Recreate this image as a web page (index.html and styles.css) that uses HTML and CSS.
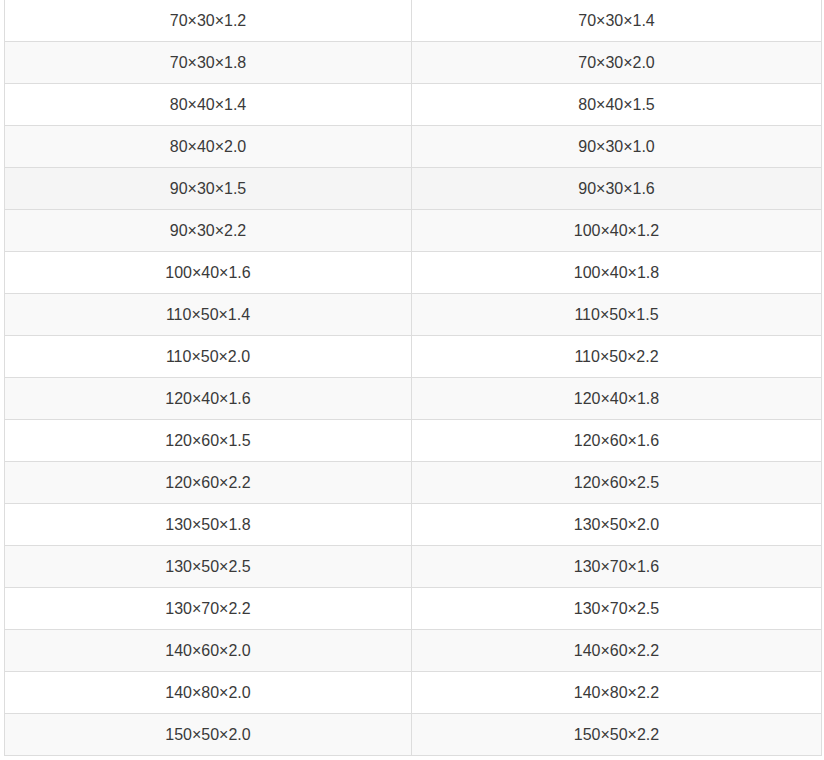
FILE: index.html
```html
<!DOCTYPE html>
<html lang="zh-CN">
<head>
    <meta charset="UTF-8">
    <title>规格表</title>
    <link rel="stylesheet" href="styles.css">
</head>
<body>
    <table class="spec-table">
        <colgroup>
            <col class="col-left">
            <col class="col-right">
        </colgroup>
        <tbody>
            <tr><td>70×30×1.2</td><td>70×30×1.4</td></tr>
            <tr><td>70×30×1.8</td><td>70×30×2.0</td></tr>
            <tr><td>80×40×1.4</td><td>80×40×1.5</td></tr>
            <tr><td>80×40×2.0</td><td>90×30×1.0</td></tr>
            <tr class="is-hover"><td>90×30×1.5</td><td>90×30×1.6</td></tr>
            <tr><td>90×30×2.2</td><td>100×40×1.2</td></tr>
            <tr><td>100×40×1.6</td><td>100×40×1.8</td></tr>
            <tr><td>110×50×1.4</td><td>110×50×1.5</td></tr>
            <tr><td>110×50×2.0</td><td>110×50×2.2</td></tr>
            <tr><td>120×40×1.6</td><td>120×40×1.8</td></tr>
            <tr><td>120×60×1.5</td><td>120×60×1.6</td></tr>
            <tr><td>120×60×2.2</td><td>120×60×2.5</td></tr>
            <tr><td>130×50×1.8</td><td>130×50×2.0</td></tr>
            <tr><td>130×50×2.5</td><td>130×70×1.6</td></tr>
            <tr><td>130×70×2.2</td><td>130×70×2.5</td></tr>
            <tr><td>140×60×2.0</td><td>140×60×2.2</td></tr>
            <tr><td>140×80×2.0</td><td>140×80×2.2</td></tr>
            <tr><td>150×50×2.0</td><td>150×50×2.2</td></tr>
        </tbody>
    </table>
</body>
</html>
```

FILE: styles.css
```css
/* pagina */
html, body {
    margin: 0;
    padding: 0;
    background: #fff;
}

/* tabela de especificações */
.spec-table {
    margin: -1px 0 0 4px;
    width: 817px;
    border-collapse: collapse;
    table-layout: fixed;
    font-family: "Liberation Sans", Arial, sans-serif;
    font-size: 16px;
    color: #3a3a3a;
}

.col-left {
    width: 407px;
}

.col-right {
    width: 410px;
}

.spec-table td {
    height: 41px;
    padding: 0;
    border: 1px solid #ddd;
    text-align: center;
    vertical-align: middle;
    line-height: 20px;
}

.spec-table tr:nth-child(even) {
    background: #f9f9f9;
}

/* linha com o mouse em cima */
.spec-table tr.is-hover {
    background: #f5f5f5;
}
```
